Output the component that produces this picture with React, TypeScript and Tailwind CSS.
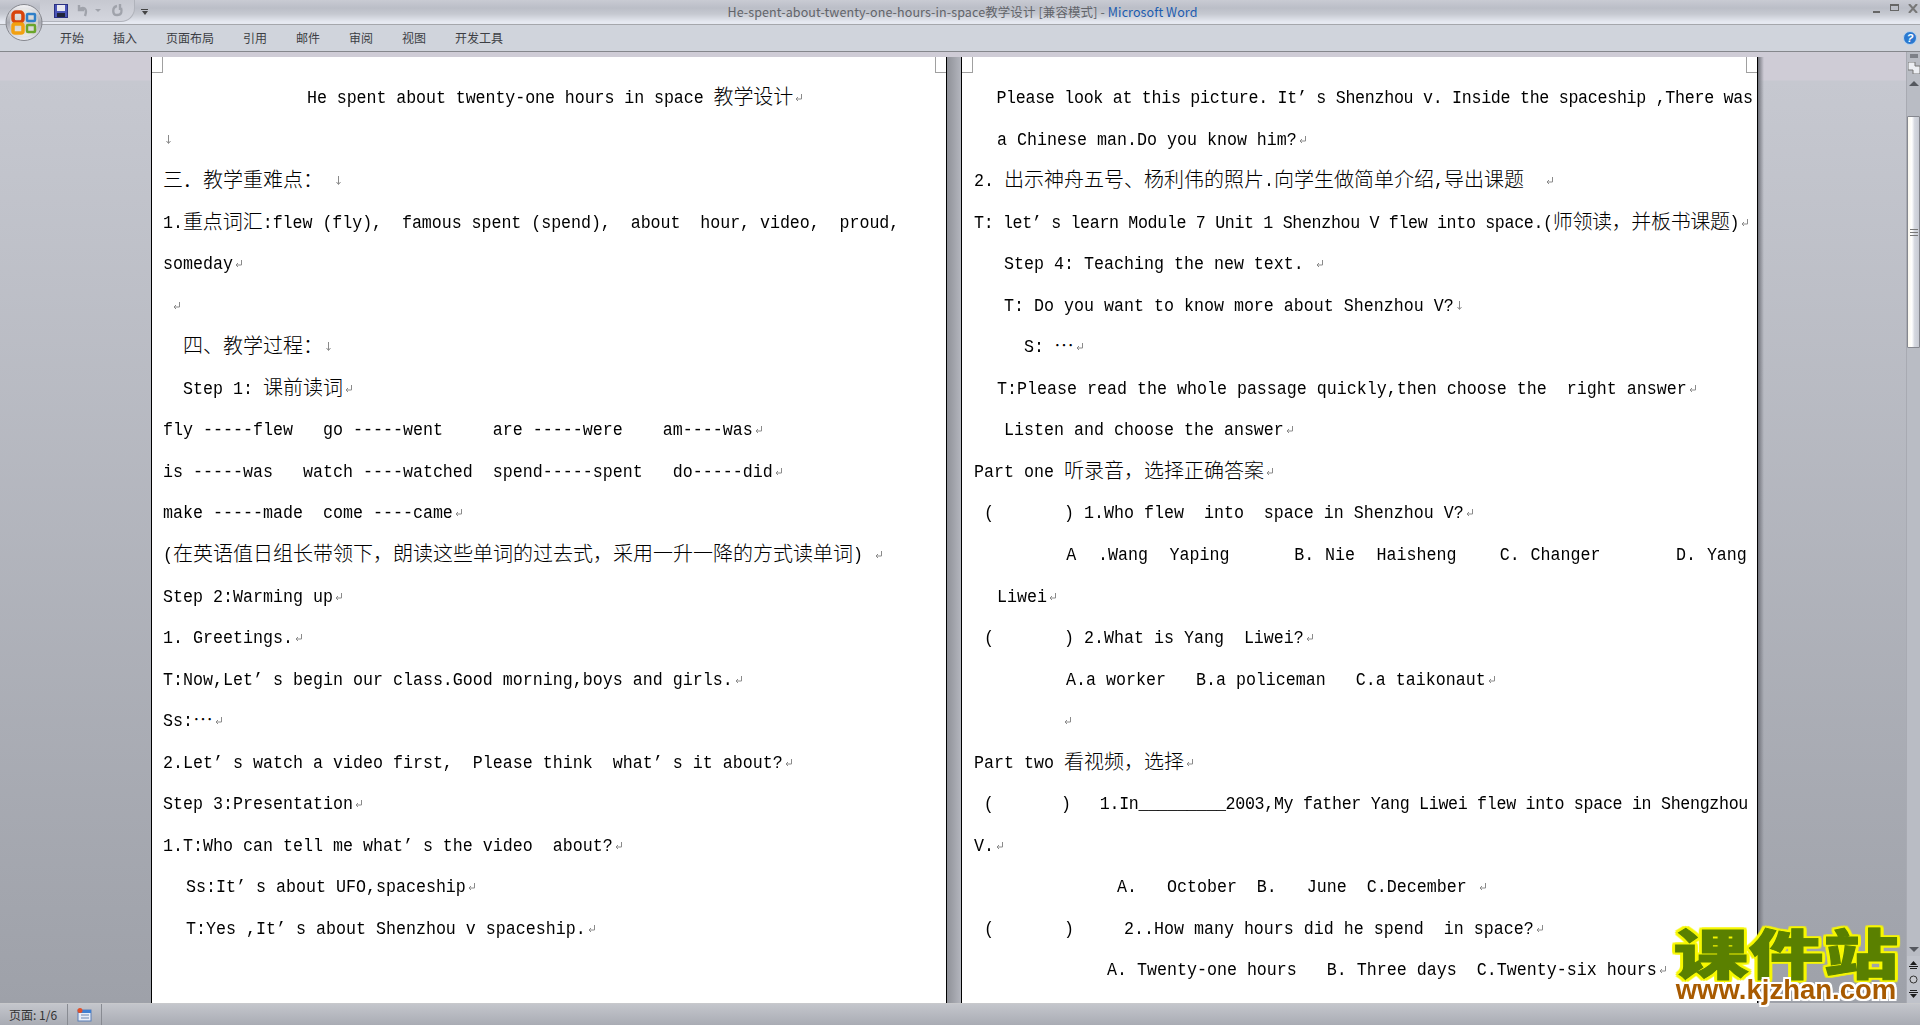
const cjkRe = /([\u3000-\u303f\u4e00-\u9fff\uff00-\uffef\u22ef]+)/;

function Mark({ kind = "para" }: { kind?: "para" | "line" }) {
  return (
    <svg width="9" height="10" viewBox="0 0 9 10" className="inline-block ml-[1px] align-[-1px]" fill="none" stroke="#8a8a8a" strokeWidth="1">
      {kind === "para" ? <path d="M7.5 1v5H2M4 4 2 6l2 2" /> : <path d="M4.5 0v8M2.5 6l2 2.5 2-2.5" />}
    </svg>
  );
}

type L = { t: string; pl?: number; m?: "para" | "line" | "none"; ws?: number; ls?: number };

function Line({ line }: { line: L }) {
  const parts = line.t.split(cjkRe);
  const mark = line.m ?? "para";
  return (
    <div
      className="h-[41.55px] leading-[41.55px] whitespace-pre"
      style={{ paddingLeft: line.pl ?? 0, wordSpacing: line.ws ?? 0, letterSpacing: line.ls ?? 0 }}
    >
      {parts.map((p, i) =>
        cjkRe.test(p) ? (
          <span key={i} className="text-[20px] leading-none align-[-2px] font-light font-['Noto_Sans_CJK_SC',sans-serif]">{p}</span>
        ) : p ? (
          <span key={i} className="inline-block scale-y-[1.15]">{p}</span>
        ) : null,
      )}
      {mark !== "none" && <Mark kind={mark} />}
    </div>
  );
}

const leftLines: L[] = [
  { t: "He spent about twenty-one hours in space 教学设计", pl: 144, ls: -0.08 },
  { t: "", m: "line" },
  { t: "三．教学重难点： ", m: "line" },
  { t: "1.重点词汇:flew (fly),  famous spent (spend),  about  hour, video,  proud,", m: "none", ls: -0.05 },
  { t: "someday" },
  { t: "", pl: 8 },
  { t: "  四、教学过程：", m: "line" },
  { t: "  Step 1: 课前读词" },
  { t: "fly -----flew   go -----went     are -----were    am----was" },
  { t: "is -----was   watch ----watched  spend-----spent   do-----did" },
  { t: "make -----made  come ----came" },
  { t: "(在英语值日组长带领下，朗读这些单词的过去式，采用一升一降的方式读单词) " },
  { t: "Step 2:Warming up" },
  { t: "1. Greetings." },
  { t: "T:Now,Let’ s begin our class.Good morning,boys and girls." },
  { t: "Ss:⋯" },
  { t: "2.Let’ s watch a video first,  Please think  what’ s it about?" },
  { t: "Step 3:Presentation" },
  { t: "1.T:Who can tell me what’ s the video  about?" },
  { t: "  Ss:It’ s about UFO,spaceship", pl: 3 },
  { t: "  T:Yes ,It’ s about Shenzhou v spaceship.", pl: 3 },
];

const rightLines: L[] = [
  { t: "  Please look at this picture. It’ s Shenzhou v. Inside the spaceship ,There was", m: "none", pl: 3, ls: -0.3 },
  { t: "  a Chinese man.Do you know him?", pl: 3 },
  { t: "2. 出示神舟五号、杨利伟的照片.向学生做简单介绍,导出课题  " },
  { t: "T: let’ s learn Module 7 Unit 1 Shenzhou V flew into space.(师领读，并板书课题)", ls: -0.35 },
  { t: "   Step 4: Teaching the new text. " },
  { t: "   T: Do you want to know more about Shenzhou V?", m: "line" },
  { t: "     S: ⋯" },
  { t: "  T:Please read the whole passage quickly,then choose the  right answer", pl: 3 },
  { t: "   Listen and choose the answer" },
  { t: "Part one 听录音，选择正确答案" },
  { t: " (       ) 1.Who flew  into  space in Shenzhou V?" },
  { t: "        A  .Wang  Yaping      B. Nie  Haisheng    C. Changer       D. Yang", m: "none", ws: 0.8, pl: 6 },
  { t: "  Liwei", pl: 3 },
  { t: " (       ) 2.What is Yang  Liwei?" },
  { t: "         A.a worker   B.a policeman   C.a taikonaut", pl: 2 },
  { t: "", pl: 88 },
  { t: "Part two 看视频，选择" },
  { t: " (       )   1.In_________2003,My father Yang Liwei flew into space in Shengzhou", m: "none", ls: -0.32 },
  { t: "V." },
  { t: "              A.   October  B.   June  C.December ", pl: 3 },
  { t: " (       )     2..How many hours did he spend  in space?" },
  { t: "             A. Twenty-one hours   B. Three days  C.Twenty-six hours", pl: 3 },
];

function Page({ lines, className }: { lines: L[]; className: string }) {
  return (
    <div className={"relative bg-white border-x border-black pt-[20px] text-[16.67px] text-black font-['Liberation_Mono',monospace] overflow-hidden " + className}>
      <div className="absolute left-0 top-0 w-[11px] h-[16px] border-r border-b border-[#a0a0a0]" />
      <div className="absolute right-0 top-0 w-[11px] h-[16px] border-l border-b border-[#a0a0a0]" />
      {lines.map((l, i) => (
        <Line key={i} line={l} />
      ))}
    </div>
  );
}

function OfficeButton() {
  return (
    <svg width="38" height="39" viewBox="0 0 38 39" className="absolute left-[5px] top-[3px]">
      <defs>
        <linearGradient id="orb" x1="0" y1="0" x2="0" y2="1">
          <stop offset="0" stopColor="#f6f6f8" />
          <stop offset="0.5" stopColor="#a8aab2" />
          <stop offset="1" stopColor="#eeeef2" />
        </linearGradient>
      </defs>
      <circle cx="19" cy="19.5" r="18" fill="url(#orb)" stroke="#85878e" />
      <circle cx="19" cy="19.5" r="14" fill="#f0eee8" opacity="0.55" />
      <rect x="8" y="9" width="10" height="10" rx="3" fill="none" stroke="#d8440c" strokeWidth="3.5" />
      <rect x="8" y="21" width="10" height="9" rx="2" fill="none" stroke="#f2a010" strokeWidth="3.5" />
      <rect x="22" y="11" width="8" height="7" rx="1" fill="none" stroke="#2f7fc8" strokeWidth="2.5" />
      <rect x="22" y="22" width="8" height="7" rx="1" fill="none" stroke="#6aa52a" strokeWidth="2.5" />
    </svg>
  );
}

export default function App() {
  const tabs = ["开始", "插入", "页面布局", "引用", "邮件", "审阅", "视图", "开发工具"];
  return (
    <div className="relative w-[1920px] h-[1025px] overflow-hidden flex flex-col bg-[#c6c8d0] font-['Noto_Sans_CJK_SC',sans-serif]">
      {/* title bar */}
      <div className="h-[25px] shrink-0 flex items-start bg-[linear-gradient(to_bottom,#c9cbd3_0px,#bbbec7_8px,#c6c9d1_14px,#e6e9f1_22px)] border-b border-[#a5a7ac]">
        <div className="flex items-center ml-[40px] h-[22px] w-[95px] pl-[14px] rounded-br-[14px] border-r border-b border-[#b0b3bb] bg-[linear-gradient(to_bottom,#c6c8d0,#d4d6de)]">
          <svg width="14" height="14" viewBox="0 0 14 14">
            <rect x="0.5" y="0.5" width="13" height="13" fill="#4a55b8" stroke="#2a3080" />
            <rect x="3" y="1" width="8" height="6" fill="#e8e8f0" />
            <rect x="3" y="9" width="8" height="4" fill="#20243a" />
          </svg>
          <svg width="13" height="13" viewBox="0 0 13 13" fill="none" stroke="#a0a3ab" strokeWidth="2.4" className="ml-[9px]">
            <path d="M2 1v5h5M2 6c4-4 9-2 6 6" />
          </svg>
          <div className="ml-[5px] w-0 h-0 border-x-[3px] border-x-transparent border-t-[3px] border-t-[#a0a3ab]" />
          <svg width="13" height="13" viewBox="0 0 13 13" fill="none" stroke="#a0a3ab" strokeWidth="2.4" className="ml-[10px]">
            <path d="M9 0v6M6 2C1 3 1 11 6 11s5-4 4-7" />
          </svg>
        </div>
        <div className="ml-[6px] mt-[9px] flex flex-col items-center gap-[1px]">
          <div className="w-[7px] h-[1px] bg-[#444]" />
          <div className="w-0 h-0 border-x-[3.5px] border-x-transparent border-t-[4px] border-t-[#444]" />
        </div>
        <div className="flex-1" />
        <div className="flex items-start pt-[4px] pr-[2px] text-[#666]">
          <div className="w-[7px] h-[2px] bg-[#666] mt-[7px] mr-[10px]" />
          <div className="w-[9px] h-[7px] border border-[#666] border-t-2 mr-[9px]" />
          <svg width="10" height="9" viewBox="0 0 10 9" stroke="#777" strokeWidth="2">
            <path d="M1 0l8 9M9 0l-8 9" />
          </svg>
        </div>
      </div>
      <div className="absolute left-0 top-0 w-[1920px] h-[24px] flex justify-center items-center text-[12.5px] tracking-[0.1px] text-[#62646a] pl-[5px]">
        <span>He-spent-about-twenty-one-hours-in-space教学设计 [兼容模式] - </span>
        <span className="text-[#1c5cb0] ml-[3px]">Microsoft Word</span>
      </div>

      {/* tabs */}
      <div className="h-[27px] shrink-0 flex items-center gap-[29px] pl-[60px] bg-[#d0d4dc] border-b border-[#85878c] text-[12px] text-[#3c3e44]">
        {tabs.map((t) => (
          <span key={t}>{t}</span>
        ))}
        <div className="flex-1" />
        <div className="mr-[3px] w-[14px] h-[14px] rounded-full bg-[#2a78d0] border border-[#b8d4f0] text-white text-[11px] font-bold italic leading-[12px] text-center font-['Liberation_Sans',sans-serif]">?</div>
      </div>

      {/* workspace */}
      <div className="flex-1 min-h-0 flex bg-[linear-gradient(to_bottom,#cfccd6_0px,#cfccd6_28px,#c6c8d0_29px,#9ea1a9_100%)]">
        <div className="flex-1 flex pl-[151px] pt-[5px]">
          <Page lines={leftLines} className="w-[796px] pl-[11px]" />
          <div className="w-[14px] bg-gradient-to-r from-[#8f9198] to-[#b4b6be]" />
          <Page lines={rightLines} className="w-[797px] pl-[12px]" />
          <div className="w-[6px] bg-gradient-to-r from-[#70727a] to-transparent" />
        </div>
        <div className="w-[14px] shrink-0 flex flex-col items-center border-l border-[#a8aab2] bg-[#b9bcc4]">
          <div className="h-[4px] w-[8px] bg-[#7d8088] mt-[2px]" />
          <svg width="12" height="12" viewBox="0 0 12 12" className="mt-[4px]">
            <path d="M0 0h7v4h5v8H5V8H0z" fill="#eceef3" stroke="#777" />
          </svg>
          <div className="mt-[7px] w-0 h-0 border-x-[5px] border-x-transparent border-b-[5px] border-b-[#55585f]" />
          <div className="mt-[30px] w-[13px] h-[232px] flex items-center justify-center bg-[linear-gradient(to_right,#fbf8ee,#ffffff_35%,#d5d8e0_60%,#c8cbd4)] border border-[#85878f] rounded-[1px]">
            <div className="w-[8px] h-[7px] border-y border-[#777] bg-[linear-gradient(to_bottom,transparent_40%,#777_40%,#777_60%,transparent_60%)]" />
          </div>
          <div className="flex-1" />
          <div className="mb-[4px] w-0 h-0 border-x-[5px] border-x-transparent border-t-[5px] border-t-[#55585f]" />
          <div className="w-full h-[47px] bg-[#bfc2ca] flex flex-col items-center justify-around py-[2px]">
            <svg width="9" height="8" viewBox="0 0 9 8" fill="#1c1c1c">
              <path d="M4.5 0 8 4H1zM0 5h9v1H0zM1 7h7v1H1z" />
            </svg>
            <svg width="9" height="9" viewBox="0 0 9 9" fill="#c8cad0" stroke="#333">
              <circle cx="4.5" cy="4.5" r="3.5" />
            </svg>
            <svg width="9" height="8" viewBox="0 0 9 8" fill="#1c1c1c">
              <path d="M4.5 8 8 4H1zM0 2h9v1H0zM1 0h7v1H1z" />
            </svg>
          </div>
        </div>
      </div>

      {/* status bar */}
      <div className="h-[22px] shrink-0 flex items-stretch bg-gradient-to-b from-[#c4c6cc] to-[#a9acb4] border-t border-[#c8c9cc] text-[12px] text-[#333]">
        <div className="w-[68px] pl-[9px] flex items-center border-r border-[#888b92]">页面: 1/6</div>
        <div className="w-[34px] flex items-center justify-center border-r border-[#888b92]">
          <svg width="15" height="14" viewBox="0 0 15 14">
            <rect x="1" y="2" width="13" height="11" fill="#e8eef8" stroke="#5a7fb8" />
            <rect x="1" y="2" width="13" height="3" fill="#3f7fd0" />
            <path d="M4 7h8M4 10h8" stroke="#6a86b0" />
            <circle cx="3" cy="2.5" r="2.5" fill="#e0502a" />
          </svg>
        </div>
      </div>

      <OfficeButton />

      {/* watermark */}
      <div className="absolute left-[1666px] top-[927px] w-[240px] flex flex-col items-center">
        <div className="h-[50px] text-[60px] leading-[50px] font-black text-[#5a8000] scale-x-[1.25] scale-y-[0.9] [-webkit-text-stroke:1px_#5a8000] [filter:drop-shadow(2px_0_0_#f7f700)_drop-shadow(-2px_0_0_#f7f700)_drop-shadow(0_2px_0_#f7f700)_drop-shadow(0_-2px_0_#f7f700)]">课件站</div>
        <div className="text-[27.5px] leading-[26px] font-bold text-[#a85a00] [filter:drop-shadow(2px_0_0_#ffffff)_drop-shadow(-2px_0_0_#ffffff)_drop-shadow(0_2px_0_#ffffff)_drop-shadow(0_-2px_0_#ffffff)] font-['Liberation_Sans',sans-serif]">www.kjzhan.com</div>
      </div>
    </div>
  );
}
